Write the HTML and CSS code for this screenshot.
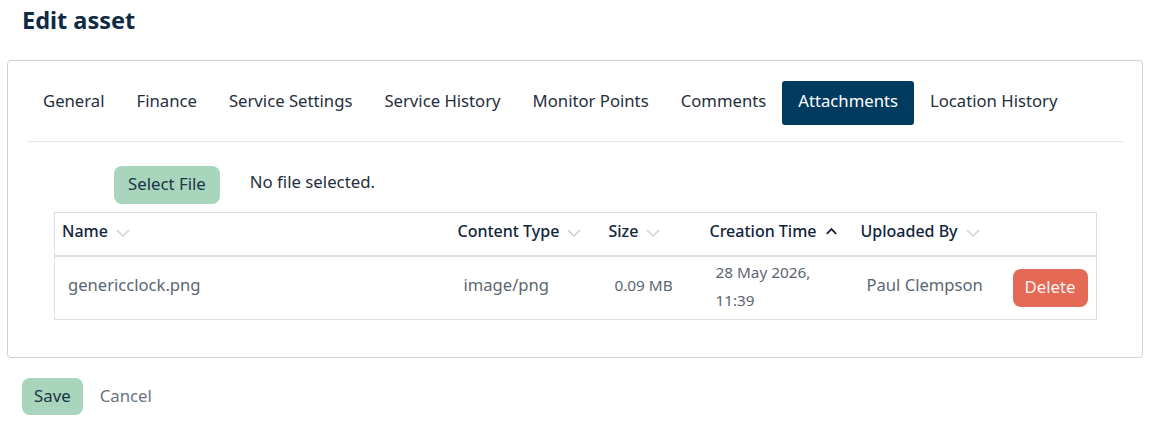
FILE: index.html
```html
<!DOCTYPE html>
<html lang="en">
<head>
<meta charset="utf-8">
<title>Edit asset</title>
<link rel="stylesheet" href="styles.css">
</head>
<body>
<div class="page">
  <h1 class="page-title">Edit asset</h1>

  <section class="card">
    <nav class="tabs">
      <a class="tab">General</a>
      <a class="tab">Finance</a>
      <a class="tab">Service Settings</a>
      <a class="tab">Service History</a>
      <a class="tab">Monitor Points</a>
      <a class="tab">Comments</a>
      <a class="tab tab-active">Attachments</a>
      <a class="tab">Location History</a>
    </nav>

    <div class="upload">
      <button class="btn btn-green btn-file">Select File</button>
      <span class="upload-status">No file selected.</span>
    </div>

    <table class="grid">
      <colgroup>
        <col class="c-name">
        <col class="c-type">
        <col class="c-size">
        <col class="c-time">
        <col class="c-user">
        <col class="c-action">
      </colgroup>
      <thead>
        <tr>
          <th><span class="th-inner">Name <svg class="chev" viewBox="0 0 14 8"><path d="M1 1l6 6 6-6"/></svg></span></th>
          <th><span class="th-inner">Content Type <svg class="chev" viewBox="0 0 14 8"><path d="M1 1l6 6 6-6"/></svg></span></th>
          <th><span class="th-inner">Size <svg class="chev" viewBox="0 0 14 8"><path d="M1 1l6 6 6-6"/></svg></span></th>
          <th><span class="th-inner">Creation Time <svg class="chev chev-up" viewBox="0 0 14 8"><path d="M2 7l5-5 5 5"/></svg></span></th>
          <th><span class="th-inner">Uploaded By <svg class="chev" viewBox="0 0 14 8"><path d="M1 1l6 6 6-6"/></svg></span></th>
          <th></th>
        </tr>
      </thead>
      <tbody>
        <tr>
          <td>genericclock.png</td>
          <td>image/png</td>
          <td class="small">0.09 MB</td>
          <td class="small stacked">28 May 2026,<br>11:39</td>
          <td>Paul Clempson</td>
          <td class="action"><button class="btn btn-red">Delete</button></td>
        </tr>
      </tbody>
    </table>
  </section>

  <div class="actions">
    <button class="btn btn-green">Save</button>
    <a class="link-cancel">Cancel</a>
  </div>
</div>
</body>
</html>
```

FILE: styles.css
```css
* {
  box-sizing: border-box;
}

html, body {
  margin: 0;
  padding: 0;
  background: #ffffff;
}

body {
  font-family: "Noto Sans", "Open Sans", sans-serif;
  font-size: 17px;
  color: #1f2f3d;
}

.page {
  padding: 0 9px 0 7px;
}

.page-title {
  margin: 0;
  padding: 4px 0 0 15px;
  height: 60px;
  font-size: 23.5px;
  font-weight: 700;
  color: #0f2a44;
  line-height: 32px;
}

.card {
  border: 1px solid #cfd2d5;
  border-radius: 4px;
  padding: 20px 19px 37px 19px;
}

.tabs {
  display: flex;
  align-items: center;
  height: 44px;
  margin-bottom: 16px;
}

.tab {
  display: flex;
  align-items: center;
  height: 44px;
  padding: 0 16px 5px 16px;
  font-size: 16.7px;
  color: #1f2f3d;
  border-radius: 3px;
  white-space: nowrap;
}

.tab-active {
  background: #003a5f;
  color: #ffffff;
}

.upload {
  border-top: 1px solid #e3e5e7;
  padding: 24px 0 0 87px;
  display: flex;
  align-items: flex-start;
  gap: 30px;
}

.upload-status {
  padding-top: 4px;
  font-size: 16.8px;
  color: #1f2f3d;
}

.btn {
  font-family: inherit;
  font-size: 16.8px;
  border: 0;
  border-radius: 8px;
  height: 38px;
  padding: 0 12px 3px;
  cursor: pointer;
}

.btn-file {
  padding: 0 14px 3px;
}

.btn-green {
  background: #a8d5bb;
  color: #1c3446;
}

.btn-red {
  background: #e46a56;
  color: #fdf2f0;
  padding: 0 12px 2px;
}

.grid {
  margin: 8px 0 0 27px;
  width: 1042px;
  border-collapse: collapse;
  table-layout: fixed;
  border: 1px solid #dcdfe2;
}

.c-name { width: 396px; }
.c-type { width: 151px; }
.c-size { width: 101px; }
.c-time { width: 151px; }
.c-user { width: 151px; }
.c-action { width: 92px; }

.grid th {
  height: 43px;
  padding: 0 7px 6px;
  text-align: left;
  font-weight: 500;
  font-size: 16px;
  color: #10253a;
  border-bottom: 2px solid #dcdfe2;
  white-space: nowrap;
}

.th-inner {
  display: inline-flex;
  align-items: center;
  gap: 8px;
}

.chev {
  width: 14px;
  height: 8px;
  margin-top: 4px;
  fill: none;
  stroke: #c9cdd1;
  stroke-width: 1.3;
}

.chev-up {
  stroke: #10253a;
  stroke-width: 2;
  width: 13px;
  margin-top: 0;
}

.grid td {
  height: 64px;
  padding: 0 0 6px 13px;
  font-size: 16.6px;
  color: #5b6672;
  vertical-align: middle;
  white-space: nowrap;
}

.grid td.small {
  font-size: 15.3px;
}

.grid td.stacked {
  line-height: 28px;
  padding-bottom: 4px;
}

.grid td.action {
  padding: 0 0 0 8px;
}

.actions {
  display: flex;
  align-items: center;
  gap: 17px;
  padding: 20px 0 0 15px;
}

.actions .btn {
  padding: 0 12px 2px;
  height: 37px;
}

.link-cancel {
  color: #6a7580;
  font-size: 16.8px;
  padding-bottom: 2px;
}
```
